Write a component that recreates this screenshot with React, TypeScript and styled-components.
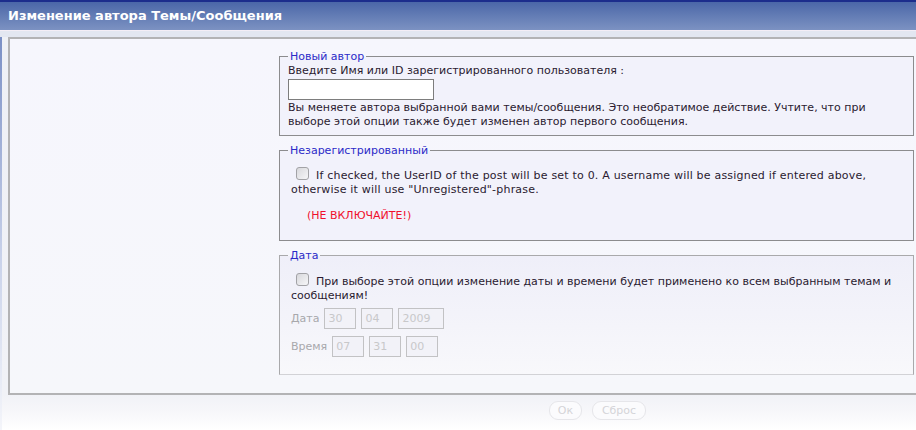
import { FC } from 'react';
import styled, { createGlobalStyle } from 'styled-components';

const GlobalStyle = createGlobalStyle`
  html, body {
    margin: 0;
    padding: 0;
    background: #ffffff;
  }
  body {
    font-family: "DejaVu Sans", Verdana, sans-serif;
  }
`;

const Page = styled.div`
  width: 916px;
  height: 430px;
  overflow: hidden;
  background:
    linear-gradient(to bottom, #6d84bf, #c9d2ea 60%, #f4f5fa) no-repeat 0 0 / 2px 100%,
    linear-gradient(to bottom, #eef0f6 0, #f1f2f7 395px, #f7f7fa 412px, #ffffff 430px);
`;

const Header = styled.div`
  height: 28px;
  border-top: 2px solid #1c2d8c;
  background: linear-gradient(to bottom, #4b67a8, #7c92c2);
  color: #ffffff;
  font-weight: bold;
  font-size: 13px;
  line-height: 27px;
  padding-left: 8px;
  white-space: nowrap;
`;

const Strip = styled.div`
  height: 6px;
  border-top: 1px solid #f4eef6;
  background: #e3e7f1;
`;

const Panel = styled.div`
  margin-left: 8px;
  border: 2px solid #b3b3b5;
  border-right: none;
  background: linear-gradient(to bottom, #f6f6fd, #f6f7fb);
  display: grid;
  grid-template-columns: 269px 635px;
  padding: 11px 0 18px 0;
`;

const Column = styled.div`
  display: flex;
  flex-direction: column;
  gap: 8px;
`;

const Group = styled.fieldset<{ $faded?: boolean }>`
  margin: 0;
  padding: 0 8px 4px 8px;
  border: 1px solid ${(p) => (p.$faded ? '#a9a9ab' : '#8c8c8e')};
  border-bottom-color: ${(p) => (p.$faded ? '#d2d2d6' : '#8c8c8e')};
  background: ${(p) =>
    p.$faded
      ? 'linear-gradient(to bottom, #efeff9, #f4f4fa 60%, #f8f8fb)'
      : '#f2f2fb'};
  min-width: 0;
`;

const Legend = styled.legend`
  padding: 0 2px;
  color: #2b2bc8;
  font-size: 11px;
  line-height: 13px;
`;

const Text = styled.div<{ $wide?: boolean }>`
  font-size: 11px;
  line-height: 14px;
  color: #2a1a30;
  letter-spacing: ${(p) => (p.$wide ? '0.2px' : 'normal')};
`;

const Block = styled.div<{ $top: number; $indent?: number }>`
  margin-top: ${(p) => p.$top}px;
  padding-left: ${(p) => p.$indent ?? 0}px;
`;

const NameInput = styled.input`
  display: block;
  box-sizing: border-box;
  width: 146px;
  height: 21px;
  margin: 1px 0 1px;
  border: 1px solid #7d7d7d;
  background: #ffffff;
  padding: 0 3px;
  font-family: inherit;
  font-size: 11px;
`;

const Check = styled.input.attrs({ type: 'checkbox' })`
  appearance: none;
  box-sizing: border-box;
  width: 13px;
  height: 13px;
  margin: 0 7px 0 5px;
  vertical-align: -1px;
  border: 1px solid #a2a2a6;
  border-radius: 3px;
  background: linear-gradient(135deg, #d8d8dc, #f6f6f8);
`;

const Warning = styled.div`
  margin-top: 12px;
  padding-left: 16px;
  font-size: 11px;
  line-height: 14px;
  color: #f0102c;
`;

const FieldRow = styled.div<{ $top: number }>`
  display: flex;
  align-items: center;
  gap: 5px;
  margin-top: ${(p) => p.$top}px;
`;

const FieldLabel = styled.span`
  font-size: 11px;
  color: #a8a8ac;
`;

const SmallInput = styled.input<{ $w: number }>`
  box-sizing: border-box;
  width: ${(p) => p.$w}px;
  height: 21px;
  margin: 0;
  border: 1px solid #c2c2c4;
  background: #f2f2f8;
  padding: 0 3px;
  color: #c8c8ca;
  font-family: inherit;
  font-size: 11px;
`;

const Footer = styled.div`
  display: grid;
  grid-template-columns: 269px 635px;
  padding: 6px 0 0 10px;
`;

const Buttons = styled.div`
  grid-column: 2;
  display: flex;
  justify-content: center;
  gap: 10px;
  padding-left: 2px;
`;

const Button = styled.button<{ $w: number }>`
  box-sizing: border-box;
  width: ${(p) => p.$w}px;
  height: 19px;
  padding: 0;
  border: 1px solid #e6e6ea;
  border-radius: 9px;
  background: #fbfbfd;
  color: #d4d4d8;
  font-family: inherit;
  font-size: 11px;
`;

const App: FC = () => {
  return (
    <Page>
      <GlobalStyle />
      <Header>Изменение автора Темы/Сообщения</Header>
      <Strip />
      <Panel>
        <div />
        <Column>
          <Group>
            <Legend>Новый автор</Legend>
            <Block $top={1}>
              <Text>Введите Имя или ID зарегистрированного пользователя :</Text>
              <NameInput type="text" />
              <Text>
                Вы меняете автора выбранной вами темы/сообщения. Это необратимое действие. Учтите, что при
                выборе этой опции также будет изменен автор первого сообщения.
              </Text>
            </Block>
            <Block $top={2} />
          </Group>
          <Group>
            <Legend>Незарегистрированный</Legend>
            <Block $top={10} $indent={3}>
              <Text $wide>
                <Check />
                If checked, the UserID of the post will be set to 0. A username will be assigned if entered above,
                otherwise it will use "Unregistered"-phrase.
              </Text>
              <Warning>(НЕ ВКЛЮЧАЙТЕ!)</Warning>
            </Block>
            <Block $top={13} />
          </Group>
          <Group $faded>
            <Legend>Дата</Legend>
            <Block $top={11} $indent={3}>
              <Text>
                <Check />
                При выборе этой опции изменение даты и времени будет применено ко всем выбранным темам и
                сообщениям!
              </Text>
              <FieldRow $top={5}>
                <FieldLabel>Дата</FieldLabel>
                <SmallInput $w={32} defaultValue="30" disabled />
                <SmallInput $w={32} defaultValue="04" disabled />
                <SmallInput $w={46} defaultValue="2009" disabled />
              </FieldRow>
              <FieldRow $top={7}>
                <FieldLabel>Время</FieldLabel>
                <SmallInput $w={32} defaultValue="07" disabled />
                <SmallInput $w={32} defaultValue="31" disabled />
                <SmallInput $w={32} defaultValue="00" disabled />
              </FieldRow>
            </Block>
            <Block $top={13} />
          </Group>
        </Column>
      </Panel>
      <Footer>
        <Buttons>
          <Button $w={33} disabled>Ок</Button>
          <Button $w={54} disabled>Сброс</Button>
        </Buttons>
      </Footer>
    </Page>
  );
};

export default App;
